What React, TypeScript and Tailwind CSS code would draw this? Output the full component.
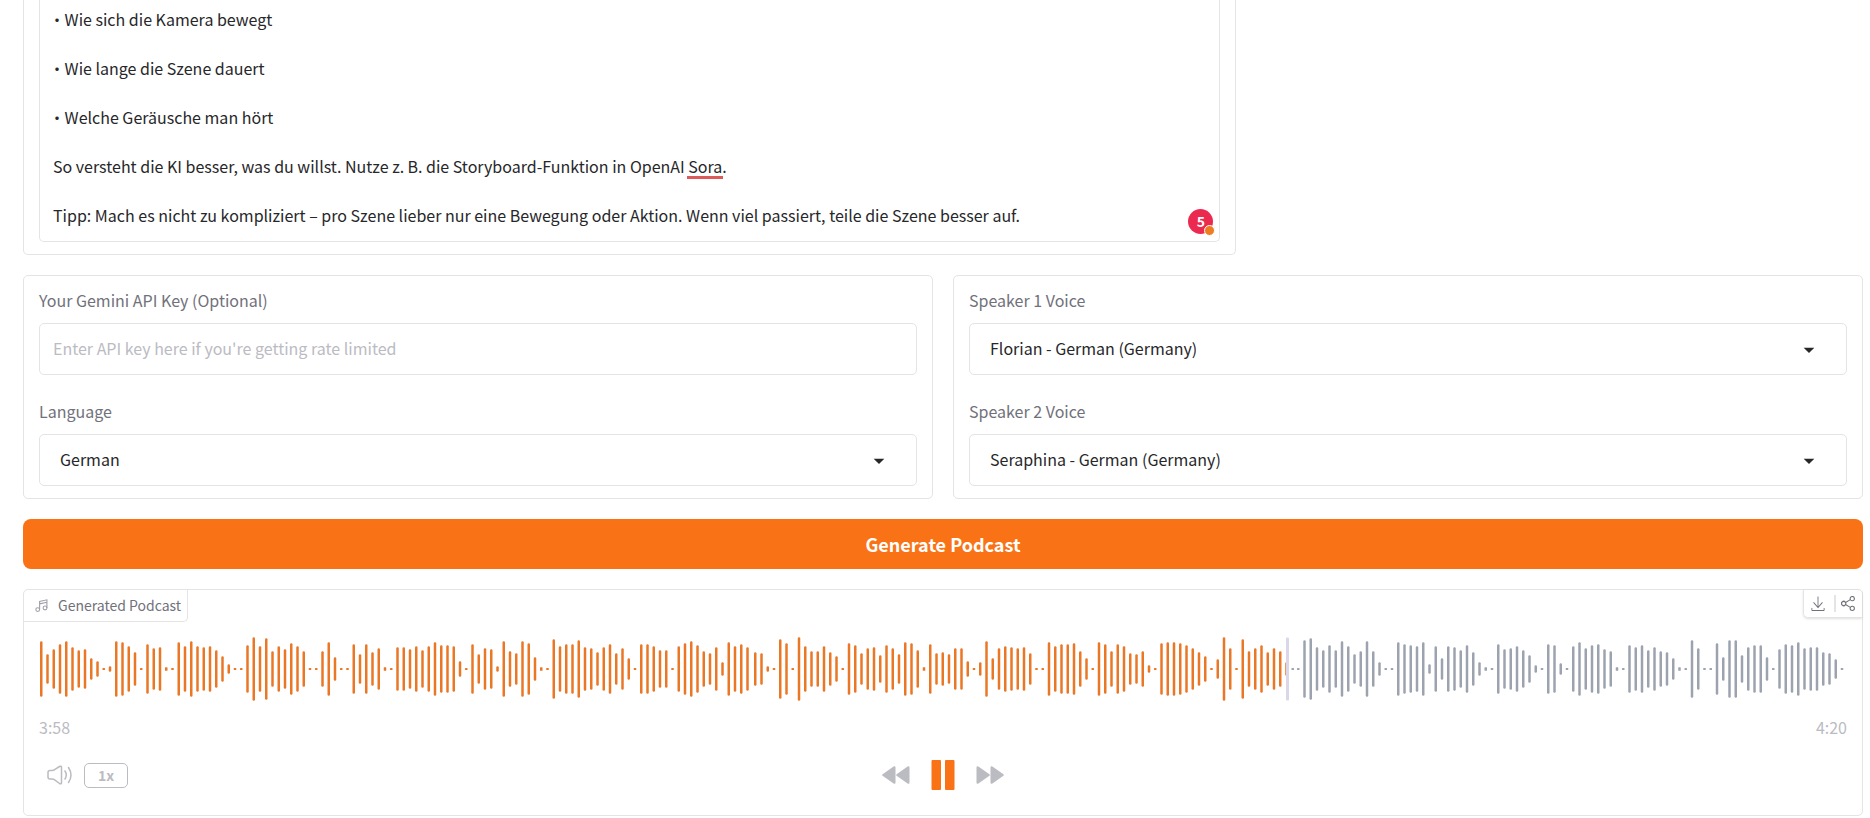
import { useState } from "react";

const script = [
  "• Wie sich die Kamera bewegt",
  "• Wie lange die Szene dauert",
  "• Welche Geräusche man hört",
  "So versteht die KI besser, was du willst. Nutze z.\u2009B. die Storyboard-Funktion in OpenAI Sora.",
  "Tipp: Mach es nicht zu kompliziert – pro Szene lieber nur eine Bewegung oder Aktion. Wenn viel passiert, teile die Szene besser auf.",
].join("\n");

// bar heights in thirds of a pixel, measured from the centre line
const segments = [
  {
    start: 1,
    bars: [
      83, 44, 59, 74, 83, 65, 56, 59, 32, 23, 3, 8, 83, 80, 68, 50, 3, 74, 62, 65, 5, 3, 80, 68, 83, 68, 65, 68, 56, 38, 14, 3, 3,
      71, 95, 68, 92, 53, 68, 59, 77, 68, 53, 3, 3, 53, 80, 35, 3, 3, 74, 44, 74, 50, 62, 5, 3, 65, 65, 59, 68, 56, 68, 80, 71, 71,
      68, 23, 3, 74, 44, 62, 59, 8, 83, 53, 47, 83, 77, 35, 5, 3, 89, 68, 74, 74, 86, 65, 62, 50, 65, 74, 47, 62, 32, 3, 74, 74,
      68, 56, 56, 3, 68, 77, 83, 71, 53, 47, 65, 20, 80, 68, 74, 65,
    ],
  },
  {
    start: 715,
    bars: [
      50, 47, 8, 3, 89, 77, 3, 95, 68, 53, 53, 68, 50, 38, 3, 77, 71, 47, 62, 65, 41, 71, 62, 44, 80, 77, 56, 5, 74, 47, 50, 44, 62,
      62, 23, 3, 20, 83, 32, 62, 68, 65, 62, 65, 47, 3, 3, 80, 68, 74, 74, 77, 53, 32, 3, 80, 74, 53, 74, 68, 47, 44, 53, 11, 3, 77,
      80, 80, 77, 71, 62, 50, 38, 3, 29, 95, 62, 3, 89, 53, 62, 71, 50, 62, 53, 20, 3,
    ],
  },
  {
    start: 1258,
    bars: [
      3, 86, 92, 65, 56, 71, 56, 83, 68, 44, 53, 83, 53, 20, 3, 3, 80, 74, 71, 68, 80, 14, 68, 32, 68, 65, 56, 71, 50, 20, 5, 3, 74,
      59, 62, 68, 56, 41, 11, 3, 74, 71, 17, 3, 68, 80, 62, 71, 74, 59, 53, 5, 3, 71, 65, 71, 56, 65, 53, 50, 32, 5, 3, 86, 62, 3, 3,
      77, 35, 86, 86, 41, 65, 71, 71, 35, 3, 59, 74, 71, 80, 62, 65, 65, 50, 47, 29, 3,
    ],
  },
];

const CURSOR = 1247;

function Waveform() {
  return (
    <svg viewBox="0 0 1808 64" className="block w-full" role="img" aria-label="Waveform">
      {segments.map((seg) =>
        seg.bars.map((v, i) => {
          const x = seg.start + i * 6.25;
          return (
            <rect
              key={x}
              x={x}
              y={32 - v / 3}
              width={2.5}
              height={(v * 2) / 3}
              rx={v > 5 ? 1.25 : 0.5}
              fill={x < CURSOR ? "#ea7726" : "#9ca3af"}
            />
          );
        })
      )}
      <rect x={CURSOR} y={0.5} width={3} height={63} rx={1} fill="#dcd7e8" />
    </svg>
  );
}

type SelectFieldProps = {
  id: string;
  label: string;
  options: string[];
};

function SelectField({ id, label, options }: SelectFieldProps) {
  return (
    <div>
      <label htmlFor={id} className="mb-[10px] block leading-[25px] text-zinc-500">
        {label}
      </label>
      <div className="relative">
        <select
          id={id}
          className="block h-[52px] w-full appearance-none rounded-[5px] border border-zinc-200 bg-white px-5 pb-0.5 text-zinc-800 outline-none"
        >
          {options.map((o) => (
            <option key={o}>{o}</option>
          ))}
        </select>
        <svg viewBox="0 0 18 18" className="pointer-events-none absolute top-[14px] right-[26px] h-6 w-6 fill-zinc-800">
          <path d="M5 8l4 4 4-4z" />
        </svg>
      </div>
    </div>
  );
}

export default function App() {
  const [playing, setPlaying] = useState(true);

  return (
    <div className="flex flex-col overflow-hidden bg-white font-['Noto_Sans_CJK_SC',sans-serif] text-base text-zinc-800">
      <main className="-mt-[5px] flex flex-col gap-5 pr-[7px] pl-[23px]">
        <div className="grid grid-cols-[2fr_1fr] gap-5">
          <div className="rounded-b-[5px] border border-t-0 border-zinc-200 px-[15px] pb-3">
            <div className="relative">
              <textarea
                aria-label="Content"
                rows={5}
                defaultValue={script}
                className="block w-full resize-none overflow-hidden rounded-b-[5px] border border-t-0 border-zinc-200 px-[13px] pb-px leading-[49px] outline-none [font-feature-settings:'palt']"
              />
              <span className="absolute top-[181px] left-[648px] h-[3px] w-9 bg-[#dc5a5a]" />
              <span className="absolute right-[7px] bottom-2 flex h-[25px] w-[25px] items-center justify-center rounded-full bg-[#ec2a50] pb-0.5 text-sm font-bold text-white">
                5
                <span className="absolute -right-0.5 -bottom-0.5 h-[11px] w-[11px] rounded-full border border-white bg-[#ee7d22]" />
              </span>
            </div>
          </div>
        </div>

        <div className="grid grid-cols-2 gap-5">
          <div className="flex flex-col gap-6 rounded-[5px] border border-zinc-200 px-[15px] py-3">
            <div>
              <label htmlFor="api-key" className="mb-[10px] block leading-[25px] text-zinc-500">
                Your Gemini API Key (Optional)
              </label>
              <input
                id="api-key"
                type="text"
                placeholder="Enter API key here if you're getting rate limited"
                className="block h-[52px] w-full rounded-[5px] border border-zinc-200 px-[13px] pb-0.5 outline-none placeholder:text-[#bbbbc2]"
              />
            </div>
            <SelectField id="language" label="Language" options={["German", "English"]} />
          </div>
          <div className="flex flex-col gap-6 rounded-[5px] border border-zinc-200 px-[15px] py-3">
            <SelectField id="voice-1" label="Speaker 1 Voice" options={["Florian - German (Germany)"]} />
            <SelectField id="voice-2" label="Speaker 2 Voice" options={["Seraphina - German (Germany)"]} />
          </div>
        </div>

        <button className="h-[50px] rounded-lg bg-[#f97316] text-lg font-bold text-white">Generate Podcast</button>

        <section className="rounded-[5px] border border-zinc-200 text-[#bbbbc2]">
          <div className="flex items-start justify-between">
            <div className="flex h-8 items-center gap-[10px] rounded-br-[5px] border-r border-b border-zinc-200 pr-[6px] pl-[11px] text-sm text-zinc-500">
              <svg viewBox="0 0 24 24" className="h-[13px] w-[13px] text-zinc-400" fill="none" stroke="currentColor" strokeWidth="2">
                <path d="M8.5 19.5V4.5L22 1.5v15M8.5 9L22 6" />
                <circle cx="5" cy="19.5" r="3.5" />
                <circle cx="18.5" cy="16.5" r="3.5" />
              </svg>
              <h2 className="pb-0.5">Generated Podcast</h2>
            </div>
            <div className="flex h-7 items-center rounded-bl-[5px] border-b border-l border-zinc-200 pr-[6px] pl-[7px] text-zinc-500 shadow-sm">
              <button aria-label="Download">
                <svg viewBox="0 0 32 32" className="h-4 w-[14px]" preserveAspectRatio="none" fill="currentColor">
                  <path d="M29 24v4H3v-4H1v4a2 2 0 0 0 2 2h26a2 2 0 0 0 2-2v-4zM27 13.5l-1.5-1.5L17 20.500V1h-2v19.500L6.500 12 5 13.500l11 11z" />
                </svg>
              </button>
              <span className="mr-[5px] ml-[9px] h-[17px] w-0.5 bg-zinc-200" />
              <button aria-label="Share">
                <svg viewBox="2 2 28 28" className="h-[15px] w-[15px]" fill="currentColor">
                  <path d="M23 20a5 5 0 0 0-3.890 1.890l-7.310-4.570a4.460 4.460 0 0 0 0-2.640l7.310-4.570A5 5 0 1 0 18 7a4.790 4.790 0 0 0 .200 1.320l-7.310 4.570a5 5 0 1 0 0 6.220l7.310 4.570A4.790 4.790 0 0 0 18 25a5 5 0 1 0 5-5zm0-16a3 3 0 1 1-3 3 3 3 0 0 1 3-3zM7 19a3 3 0 1 1 3-3 3 3 0 0 1-3 3zm16 9a3 3 0 1 1 3-3 3 3 0 0 1-3 3z" />
                </svg>
              </button>
            </div>
          </div>

          <div className="px-[15px] pt-[15px]">
            <Waveform />
            <div className="mt-[14px] flex justify-between leading-6">
              <time>3:58</time>
              <time>4:20</time>
            </div>
          </div>

          <div className="mt-[17px] mb-[21px] grid h-[38px] grid-cols-3 items-center px-[23px]">
            <div className="flex items-center gap-3">
              <button aria-label="Volume">
                <svg viewBox="0 0 25 20" className="h-5 w-[25px]" fill="none" stroke="currentColor" strokeWidth="1.5" strokeLinecap="round" strokeLinejoin="round">
                  <path d="M1 12V7.500Q1 5.500 3 5.500H5Q6.500 5.500 8 4.300L12.500 1.500Q14.500 .500 14.500 2.500V17.500Q14.500 19.500 12.500 18.500L8 15.200Q6.500 14 5 14H3Q1 14 1 12Z" />
                  <path d="M18 6Q20.500 10 18 14M21.500 2.500Q26.500 10 21.500 17.500" />
                </svg>
              </button>
              <button className="h-[25px] w-11 rounded-[5px] border border-[#bbbbc2] text-sm leading-none font-bold">1x</button>
            </div>
            <div className="flex items-center justify-center gap-[21px]">
              <button aria-label="Rewind">
                <svg viewBox="0 0 28 18" className="h-[18px] w-7" fill="currentColor">
                  <path d="M.600 8.200L11.600.500Q13.500-.500 13.500 1.500V16.500Q13.500 18.500 11.600 17.500L.600 9.800Q-.300 9 .600 8.200ZM14.600 8.200L25.600.500Q27.500-.500 27.500 1.500V16.500Q27.500 18.500 25.600 17.500L14.600 9.800Q13.700 9 14.600 8.200Z" />
                </svg>
              </button>
              <button aria-label={playing ? "Pause" : "Play"} onClick={() => setPlaying(!playing)} className="text-[#f97316]">
                <svg viewBox="0 0 24 30" className="h-[30px] w-6" fill="currentColor">
                  {playing ? (
                    <>
                      <rect x="0.500" width="9.500" height="30" rx="1" />
                      <rect x="14" width="9.500" height="30" rx="1" />
                    </>
                  ) : (
                    <path d="M1 0l22 15L1 30z" />
                  )}
                </svg>
              </button>
              <button aria-label="Forward">
                <svg viewBox="0 0 28 18" className="h-[18px] w-7" fill="currentColor">
                  <path d="M27.400 8.200L16.400.500Q14.500-.500 14.500 1.500V16.500Q14.500 18.500 16.400 17.500L27.400 9.800Q28.300 9 27.400 8.200ZM13.400 8.200L2.400.500Q.500-.500.500 1.500V16.500Q.500 18.500 2.400 17.500L13.400 9.800Q14.300 9 13.400 8.200Z" />
                </svg>
              </button>
            </div>
          </div>
        </section>
      </main>
    </div>
  );
}
